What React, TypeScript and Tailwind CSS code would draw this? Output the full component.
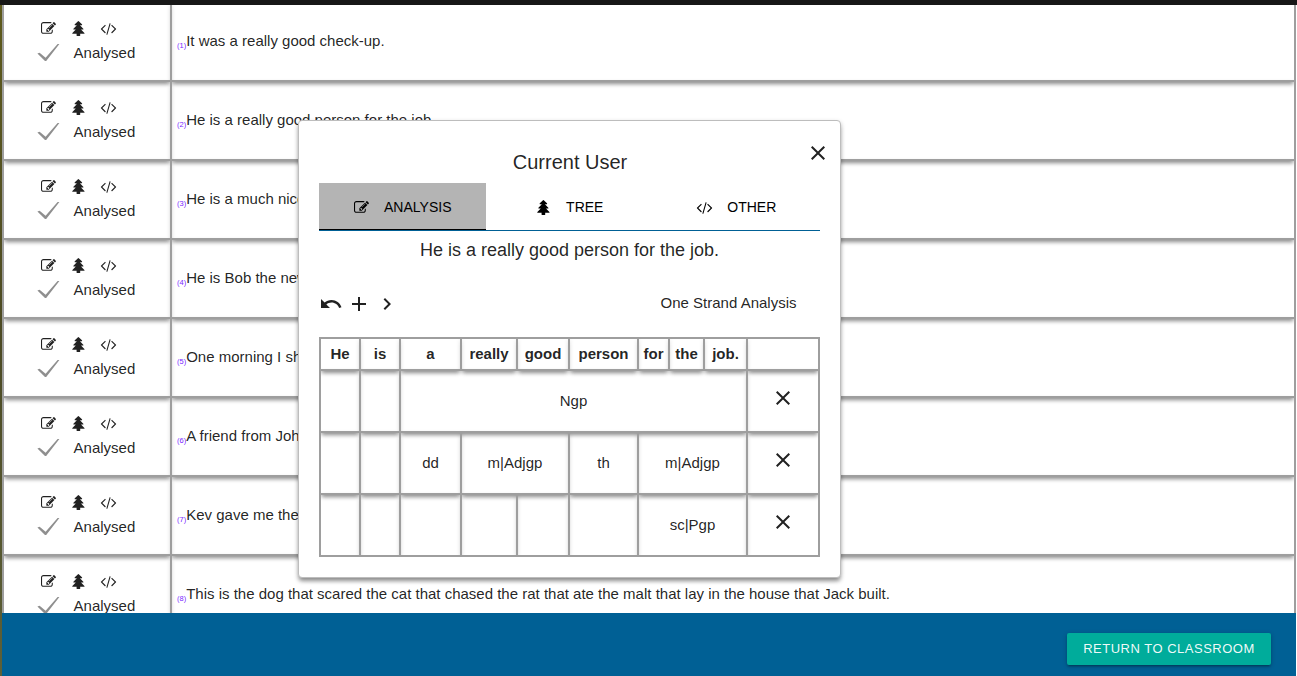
import type { ReactNode } from 'react';
import { MdAdd, MdChevronRight, MdClose, MdUndo } from 'react-icons/md';

const EDIT =
  'M888 1184l116-116-152-152-116 116v56h96v96h56zm440-720q-16-16-33 1l-350 350q-17 17-1 33t33-1l350-350q17-17 1-33zm80 594v190q0 119-84.5 203.5t-203.5 84.5h-832q-119 0-203.5-84.5t-84.5-203.5v-832q0-119 84.5-203.5t203.5-84.5h832q63 0 117 25 15 7 18 23 3 17-9 29l-49 49q-14 14-32 8-23-6-45-6h-832q-66 0-113 47t-47 113v832q0 66 47 113t113 47h832q66 0 113-47t47-113v-126q0-13 9-22l64-64q15-15 35-7t20 29zm-96-738l288 288-672 672h-288v-288zm444 132l-92 92-288-288 92-92q28-28 68-28t68 28l152 152q28 28 28 68t-28 68z';
const TREE =
  'M1619 1472q0 26-19 45t-45 19h-462q1 17 6 87.5t5 108.5q0 25-18 42.5t-43 17.5h-320q-25 0-43-17.5t-18-42.5q0-38 5-108.5t6-87.5h-462q-26 0-45-19t-19-45 19-45l402-403h-229q-26 0-45-19t-19-45 19-45l402-403h-197q-26 0-45-19t-19-45 19-45l384-384q19-19 45-19t45 19l384 384q19 19 19 45t-19 45-45 19h-197l402 403q19 19 19 45t-19 45-45 19h-229l402 403q19 19 19 45z';
const CODE =
  'M553 1399l-50 50q-10 10-23 10t-23-10l-466-466q-10-10-10-23t10-23l466-466q10-10 23-10t23 10l50 50q10 10 10 23t-10 23l-393 393 393 393q10 10 10 23t-10 23zm591-1067l-373 1291q-4 13-15.5 19.5t-23.5 2.5l-62-17q-13-4-19.5-15.5t-2.5-24.5l373-1291q4-13 15.5-19.5t23.5-2.5l62 17q13 4 19.5 15.5t2.5 24.5zm657 651l-466 466q-10 10-23 10t-23-10l-50-50q-10-10-10-23t10-23l393-393-393-393q-10-10-10-23t10-23l50-50q10-10 23-10t23 10l466 466q10 10 10 23t-10 23z';

function Glyph({ d }: { d: string }) {
  return (
    <svg viewBox="0 0 1792 1792" className="size-[15px] shrink-0 overflow-visible fill-current">
      <path d={d} />
    </svg>
  );
}

const CELL =
  'border-2 border-[#9e9e9e] p-0 shadow-[0_5px_4px_-2px_rgba(0,0,0,0.36),0_2px_5px_0_rgba(0,0,0,0.18)]';

const sentences = [
  'It was a really good check-up.',
  'He is a really good person for the job.',
  'He is a much nicer',
  'He is Bob the new',
  'One morning I shot',
  'A friend from John',
  'Kev gave me the',
  'This is the dog that scared the cat that chased the rat that ate the malt that lay in the house that Jack built.',
];

function SentenceRow({ index, text }: { index: number; text: string }) {
  return (
    <tr className="h-[79px]">
      <td className={CELL}>
        <div className="flex h-[77px] flex-col pt-[18px] pl-[33px]">
          <div className="flex h-[15px] items-center pl-[3.5px]">
            <Glyph d={EDIT} />
            <span className="ml-[15.5px] flex">
              <Glyph d={TREE} />
            </span>
            <span className="ml-[15px] flex">
              <Glyph d={CODE} />
            </span>
          </div>
          <div className="mt-1.5 flex h-[22px] items-center">
            <svg viewBox="0 0 24 22" className="h-[22px] w-6 fill-[#8f8f8f]">
              <path d="M0.4 11.4L2.6 10.8L8.6 15.8L20.6 2L22.4 2L9.2 19H8Z" />
            </svg>
            <span className="ml-[12.6px]">Analysed</span>
          </div>
        </div>
      </td>
      <td className={CELL}>
        <div className="flex h-[77px] items-center pb-0.5 pl-[5px] leading-[22px]">
          <span className="mt-2.5 w-[9.2px] text-[7.5px] whitespace-nowrap text-[#7a1fff]">({index})</span>
          <span className="whitespace-nowrap">{text}</span>
        </div>
      </td>
    </tr>
  );
}

function Tab({ icon, label, active }: { icon: string; label: string; active?: boolean }) {
  return (
    <div
      className={`flex h-[47px] w-[167px] items-center justify-center gap-[15.5px] border-b pt-[2px] text-[14px] text-black ${
        active ? 'border-black bg-[#b4b4b4]' : 'border-transparent'
      }`}
    >
      <Glyph d={icon} />
      <span>{label}</span>
    </div>
  );
}

type Part = { span?: number; label?: string };
const columns = ['w-[40px]', 'w-[40px]', 'w-[61px]', 'w-[56px]', 'w-[52px]', 'w-[69px]', 'w-[31px]', 'w-[35px]', 'w-[43px]', 'w-[72px]'];
const words = ['He', 'is', 'a', 'really', 'good', 'person', 'for', 'the', 'job.', ''];
const levels: Part[][] = [
  [{}, {}, { span: 7, label: 'Ngp' }],
  [{}, {}, { label: 'dd' }, { span: 2, label: 'm|Adjgp' }, { label: 'th' }, { span: 3, label: 'm|Adjgp' }],
  [{}, {}, {}, {}, {}, {}, { span: 3, label: 'sc|Pgp' }],
];

function AnalysisTable() {
  return (
    <div className="h-[220px] w-[501px] overflow-hidden">
      <table className="w-[501px] table-fixed border-collapse text-center">
        <colgroup>
          {columns.map((c, i) => (
            <col key={i} className={c} />
          ))}
        </colgroup>
        <tbody>
          <tr className="h-[32px]">
            {words.map((w, i) => (
              <th key={i} className={`${CELL} leading-[22px] font-bold`}>
                {w}
              </th>
            ))}
          </tr>
          {levels.map((parts, r) => (
            <tr key={r} className="h-[62px]">
              {parts.map((p, i) => (
                <td key={i} colSpan={p.span ?? 1} className={CELL}>
                  {p.label}
                </td>
              ))}
              <td className={CELL}>
                <MdClose className="mx-auto mb-1.5 size-6" />
              </td>
            </tr>
          ))}
        </tbody>
      </table>
    </div>
  );
}

function Modal({ children }: { children: ReactNode }) {
  return (
    <div className="absolute top-[120px] left-[298px] h-[458px] w-[543px] rounded-[4px] border border-[#bdbdbd] bg-white px-5 shadow-[0_4px_4px_-1px_rgba(0,0,0,0.34),0_2px_5px_0_rgba(0,0,0,0.2)]">
      {children}
    </div>
  );
}

export default function App() {
  return (
    <div className="relative flex h-[676px] w-[1297px] flex-col overflow-hidden bg-white font-['Liberation_Sans',Arial,sans-serif] text-[15px] text-black/87">
      <div className="z-10 h-[5px] shrink-0 bg-[#171717]" />
      <div className="flex min-h-0 flex-1">
        <div className="w-0.5 shrink-0 bg-linear-to-b from-[#5e5a1c] via-[#4c4a24] to-[#5d6038]" />
        <div className="flex min-w-0 flex-1 flex-col">
          <div className="h-[608px] w-[1294px] shrink-0 overflow-hidden">
            <table className="-mt-1 w-[1294px] table-fixed border-collapse">
              <colgroup>
                <col className="w-[168px]" />
                <col className="w-[1124px]" />
              </colgroup>
              <tbody>
                {sentences.map((s, i) => (
                  <SentenceRow key={i} index={i + 1} text={s} />
                ))}
              </tbody>
            </table>
          </div>
          <footer className="flex h-[63px] w-[1294px] shrink-0 items-start justify-end bg-[#006095] pt-5 pr-[25px]">
            <button className="h-8 w-[204px] rounded-[2px] bg-[#00ac9b] text-[13px] tracking-[0.5px] whitespace-nowrap text-white/95 shadow-[0_2px_2px_0_rgba(0,0,0,0.14),0_3px_1px_-2px_rgba(0,0,0,0.12),0_1px_5px_0_rgba(0,0,0,0.2)]">
              RETURN TO CLASSROOM
            </button>
          </footer>
        </div>
      </div>

      <Modal>
        <div className="flex h-[62px] items-end justify-center pb-2 pl-px">
          <h1 className="text-[20px] leading-[26px]">Current User</h1>
          <MdClose className="absolute top-5 right-[10px] size-6" />
        </div>
        <div className="flex h-12 w-[501px] border-b border-[#006095]">
          <Tab icon={EDIT} label="ANALYSIS" active />
          <Tab icon={TREE} label="TREE" />
          <Tab icon={CODE} label="OTHER" />
        </div>
        <p className="pt-[7px] text-center text-[18px] leading-[24px]">He is a really good person for the job.</p>
        <div className="mt-[29px] mb-[22px] flex h-6 w-[501px] items-center gap-1">
          <MdUndo className="mt-px size-6" />
          <MdAdd className="mt-px size-6" />
          <MdChevronRight className="mt-px size-6" />
          <span className="mr-[23.5px] ml-auto">One Strand Analysis</span>
        </div>
        <AnalysisTable />
      </Modal>
    </div>
  );
}
